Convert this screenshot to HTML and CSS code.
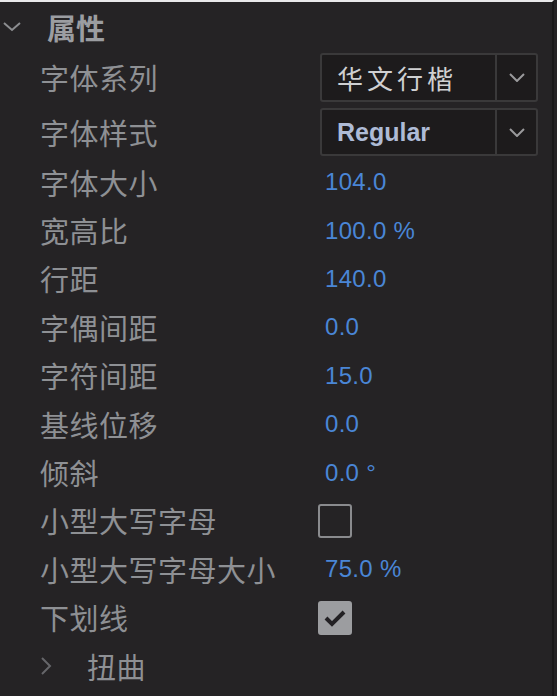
FILE: index.html
```html
<!DOCTYPE html>
<html lang="zh-CN">

<head>
    <meta charset="UTF-8">
    <meta name="viewport" content="width=device-width, initial-scale=1.0">
    <title>属性</title>
    <link rel="stylesheet" href="styles.css">
</head>

<body>
    <div class="panel">
        <div class="header">
            <svg class="twirl-open" width="18" height="10" viewBox="0 0 18 10">
                <polyline points="1,1 9,8 17,1" fill="none" stroke="#8c8d90" stroke-width="2" />
            </svg>
            <span class="title">属性</span>
        </div>

        <div class="row select-row first">
            <span class="label">字体系列</span>
            <div class="dropdown">
                <span class="dropdown-text cjk">华文行楷</span>
                <span class="dropdown-arrow">
                    <svg width="16" height="9" viewBox="0 0 16 9">
                        <polyline points="1,1 8,8 15,1" fill="none" stroke="#9a9a9c" stroke-width="2" />
                    </svg>
                </span>
            </div>
        </div>

        <div class="row select-row second">
            <span class="label">字体样式</span>
            <div class="dropdown">
                <span class="dropdown-text latin">Regular</span>
                <span class="dropdown-arrow">
                    <svg width="16" height="9" viewBox="0 0 16 9">
                        <polyline points="1,1 8,8 15,1" fill="none" stroke="#9a9a9c" stroke-width="2" />
                    </svg>
                </span>
            </div>
        </div>

        <div class="row"><span class="label">字体大小</span><span class="value">104.0</span></div>
        <div class="row"><span class="label">宽高比</span><span class="value">100.0 %</span></div>
        <div class="row"><span class="label">行距</span><span class="value">140.0</span></div>
        <div class="row"><span class="label">字偶间距</span><span class="value">0.0</span></div>
        <div class="row"><span class="label">字符间距</span><span class="value">15.0</span></div>
        <div class="row"><span class="label">基线位移</span><span class="value">0.0</span></div>
        <div class="row"><span class="label">倾斜</span><span class="value">0.0 °</span></div>
        <div class="row"><span class="label">小型大写字母</span><span class="checkbox"></span></div>
        <div class="row"><span class="label">小型大写字母大小</span><span class="value">75.0 %</span></div>
        <div class="row">
            <span class="label">下划线</span>
            <span class="checkbox checked">
                <svg width="24" height="18" viewBox="0 0 24 18">
                    <polyline points="3,9 9,15 21,3" fill="none" stroke="#232124" stroke-width="4" />
                </svg>
            </span>
        </div>
        <div class="row group">
            <svg class="twirl-closed" width="12" height="20" viewBox="0 0 12 20">
                <polyline points="2,2 10,10 2,18" fill="none" stroke="#66666a" stroke-width="2" />
            </svg>
            <span class="label">扭曲</span>
        </div>
    </div>
</body>

</html>
```

FILE: styles.css
```css
body {
    margin: 0;
    padding: 0;
    background-color: #252325;
    font-family: "Noto Sans CJK SC", "Liberation Sans", sans-serif;
}

.panel {
    width: 552px;
    height: 694px;
    border-top: 2px solid #e9e9ea;
    border-right: 2px solid #1a191a;
    overflow: hidden;
}

/* header row */
.header {
    display: flex;
    align-items: center;
    height: 51px;
}

.twirl-open {
    margin-left: 3px;
    margin-right: 26px;
    margin-top: -2px;
}

.title {
    font-size: 29px;
    font-weight: 700;
    color: #9b9da1;
    line-height: 1;
}

/* property rows */
.row {
    display: grid;
    grid-template-columns: 318px 1fr;
    align-items: center;
    height: 48.4px;
}

.label {
    padding-left: 40px;
    font-size: 29px;
    line-height: 1;
    letter-spacing: 0.5px;
    color: #8e9094;
    white-space: nowrap;
}

.value {
    padding-left: 7px;
    font-family: "Liberation Sans", Arial, sans-serif;
    font-size: 24px;
    color: #4a86d6;
    letter-spacing: 0.3px;
}

.select-row {
    align-items: start;
}

.select-row.first {
    height: 50px;
}

.select-row.second {
    height: 55px;
    padding-top: 5px;
    box-sizing: border-box;
}

.select-row .label {
    line-height: 49px;
}

.dropdown {
    display: flex;
    width: 214px;
    height: 45px;
    margin-left: 2px;
    border: 2px solid #3a393a;
    border-radius: 3px;
    background-color: #1d1b1c;
}

.second .dropdown {
    height: 44px;
}

.dropdown-text {
    flex: 1;
    display: flex;
    align-items: center;
    padding-left: 15px;
}

.dropdown-text.cjk {
    font-size: 26px;
    letter-spacing: 4px;
    color: #cfd0d2;
}

.dropdown-text.latin {
    font-family: "Liberation Sans", Arial, sans-serif;
    font-size: 25px;
    font-weight: 700;
    color: #aebbd6;
}

.dropdown-arrow {
    width: 39px;
    display: flex;
    align-items: center;
    justify-content: center;
    border-left: 2px solid #3a393a;
}

.checkbox {
    width: 30px;
    height: 30px;
    border: 2px solid #8a8b8e;
    border-radius: 3px;
    display: flex;
    align-items: center;
    justify-content: center;
}

.checkbox.checked {
    background-color: #9c9da0;
    border-color: #9c9da0;
}

.group {
    display: flex;
}

.twirl-closed {
    margin-left: 40px;
}

.group .label {
    padding-left: 35px;
}
```
